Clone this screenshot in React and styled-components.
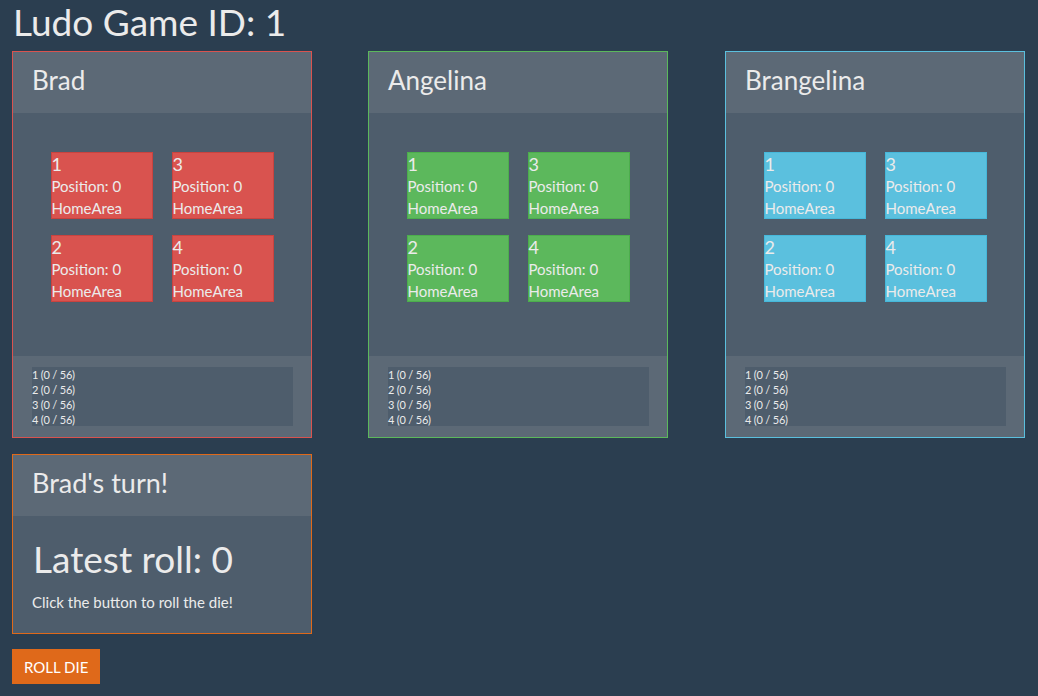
import React from "react";
import styled, { createGlobalStyle } from "styled-components";

const GlobalStyle = createGlobalStyle`
  html, body {
    margin: 0;
    padding: 0;
    background: #2b3e50;
    color: #ebebeb;
    font-family: Lato, "Open Sans", sans-serif;
    font-size: 15px;
    line-height: 1.42857;
  }
`;

const Page = styled.div`
  padding: 0 12px 12px;
  width: 1038px;
  box-sizing: border-box;
`;

const Title = styled.h1`
  margin: 0;
  font-size: 37px;
  font-weight: 400;
  line-height: 43px;
  height: 51px;
  padding-left: 1px;
`;

const Boards = styled.div`
  display: grid;
  grid-template-columns: 356px 357px 300px;
`;

const colors = {
  red: "#d9534f",
  green: "#5cb85c",
  blue: "#5bc0de",
  orange: "#df691a",
};

const tokenBorders = {
  red: "#c9433f",
  green: "#4cae4c",
  blue: "#46b8da",
};

const Panel = styled.div`
  width: 300px;
  box-sizing: border-box;
  border: 1px solid ${(p) => colors[p.$color]};
  background: #4e5d6c;
`;

const PanelHeading = styled.div`
  height: 61px;
  box-sizing: border-box;
  padding: 13px 20px 0 19px;
  background: #5c6976;
  font-size: 26px;
  line-height: 30px;
`;

const TurnHeading = styled(PanelHeading)`
  font-size: 27px;
`;

const PanelBody = styled.div`
  height: 243px;
  box-sizing: border-box;
  padding-top: 39px;
  display: flex;
  justify-content: center;
  align-items: flex-start;
`;

const TokenGrid = styled.div`
  display: grid;
  grid-template-columns: repeat(2, 102px);
  grid-auto-flow: column;
  grid-template-rows: repeat(2, 67px);
  column-gap: 19px;
  row-gap: 16px;
`;

const Token = styled.div`
  box-sizing: border-box;
  background: ${(p) => colors[p.$color]};
  border: 1px solid ${(p) => tokenBorders[p.$color]};
  display: flex;
  flex-direction: column;
`;

const TokenNumber = styled.div`
  font-size: 18px;
  line-height: 22px;
`;

const TokenLine = styled.div`
  font-size: 15px;
  line-height: 22px;
`;

const PanelFooter = styled.div`
  height: 81px;
  box-sizing: border-box;
  padding: 11px 18px 11px 19px;
  background: #5c6976;
`;

const Well = styled.div`
  background: #4e5d6c;
  height: 59px;
  box-sizing: border-box;
  font-size: 11px;
  line-height: 15px;
  letter-spacing: -0.2px;
`;

const TurnPanel = styled(Panel)`
  margin-top: 16px;
`;

const TurnBody = styled.div`
  height: 117px;
  box-sizing: border-box;
  padding: 20px 20px 0 20px;
`;

const Roll = styled.div`
  font-size: 37px;
  line-height: 46px;
`;

const Hint = styled.p`
  margin: 10px 0 0 -1px;
  font-size: 15px;
  line-height: 21px;
`;

const RollButton = styled.button`
  margin-top: 15px;
  height: 35px;
  padding: 0 12px;
  border: none;
  border-radius: 0;
  background: #df691a;
  color: #ffffff;
  font-family: Lato, "Open Sans", sans-serif;
  font-size: 15px;
  text-transform: uppercase;
  cursor: pointer;
`;

const players = [
  { name: "Brad", color: "red" },
  { name: "Angelina", color: "green" },
  { name: "Brangelina", color: "blue" },
];

const tokens = [1, 2, 3, 4];

const PlayerBoard = ({ name, color }) => (
  <Panel $color={color}>
    <PanelHeading>{name}</PanelHeading>
    <PanelBody>
      <TokenGrid>
        {tokens.map((t) => (
          <Token key={t} $color={color}>
            <TokenNumber>{t}</TokenNumber>
            <TokenLine>Position: 0</TokenLine>
            <TokenLine>HomeArea</TokenLine>
          </Token>
        ))}
      </TokenGrid>
    </PanelBody>
    <PanelFooter>
      <Well>
        {tokens.map((t) => (
          <div key={t}>
            {t} (0 / 56)
          </div>
        ))}
      </Well>
    </PanelFooter>
  </Panel>
);

const App = () => {
  return (
    <Page>
      <GlobalStyle />
      <Title>Ludo Game ID: 1</Title>
      <Boards>
        {players.map((p) => (
          <PlayerBoard key={p.name} name={p.name} color={p.color} />
        ))}
      </Boards>
      <TurnPanel $color="orange">
        <TurnHeading>Brad's turn!</TurnHeading>
        <TurnBody>
          <Roll>Latest roll: 0</Roll>
          <Hint>Click the button to roll the die!</Hint>
        </TurnBody>
      </TurnPanel>
      <RollButton>Roll Die</RollButton>
    </Page>
  );
};

export default App;
